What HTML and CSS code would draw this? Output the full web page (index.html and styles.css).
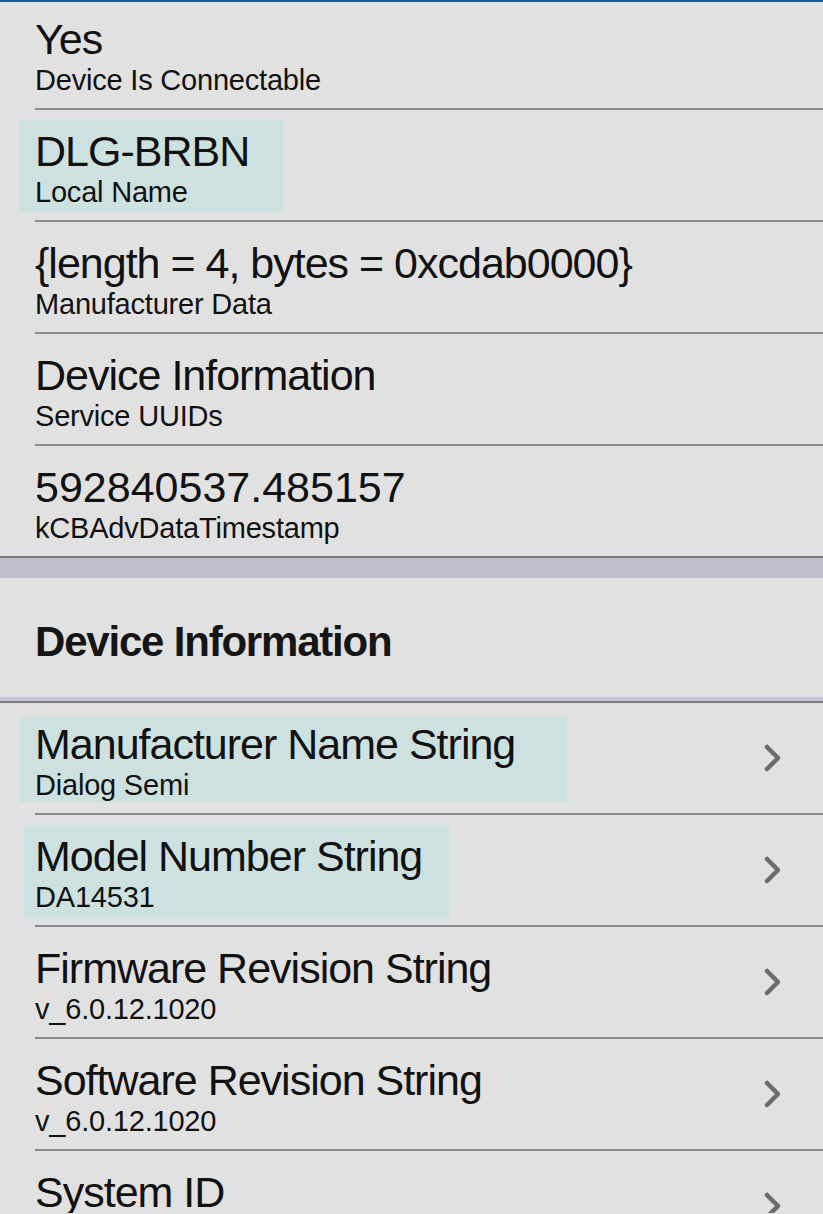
FILE: index.html
```html
<!DOCTYPE html>
<html lang="en">
<head>
    <meta charset="UTF-8">
    <meta name="viewport" content="width=device-width, initial-scale=1.0">
    <title>Advertisement Data</title>
    <link rel="stylesheet" href="styles.css">
</head>
<body>
    <div class="screen">
        <div class="list">
            <div class="row row-first">
                <div class="cell">
                    <div class="title">Yes</div>
                    <div class="sub">Device Is Connectable</div>
                </div>
            </div>
            <div class="row">
                <div class="cell hl hl-name">
                    <div class="title">DLG-BRBN</div>
                    <div class="sub">Local Name</div>
                </div>
            </div>
            <div class="row">
                <div class="cell">
                    <div class="title">{length = 4, bytes = 0xcdab0000}</div>
                    <div class="sub">Manufacturer Data</div>
                </div>
            </div>
            <div class="row">
                <div class="cell">
                    <div class="title">Device Information</div>
                    <div class="sub">Service UUIDs</div>
                </div>
            </div>
            <div class="row row-last">
                <div class="cell">
                    <div class="title num">592840537.485157</div>
                    <div class="sub">kCBAdvDataTimestamp</div>
                </div>
            </div>
        </div>

        <div class="band"></div>
        <div class="section-head">Device Information</div>
        <div class="band band-thin"></div>

        <div class="list">
            <div class="row">
                <div class="cell hl hl-maker">
                    <div class="title">Manufacturer Name String</div>
                    <div class="sub">Dialog Semi</div>
                </div>
                <svg class="chev" viewBox="0 0 20 30"><polyline points="4,4 15,15 4,26"/></svg>
            </div>
            <div class="row">
                <div class="cell hl hl-model">
                    <div class="title">Model Number String</div>
                    <div class="sub">DA14531</div>
                </div>
                <svg class="chev" viewBox="0 0 20 30"><polyline points="4,4 15,15 4,26"/></svg>
            </div>
            <div class="row">
                <div class="cell">
                    <div class="title">Firmware Revision String</div>
                    <div class="sub">v_6.0.12.1020</div>
                </div>
                <svg class="chev" viewBox="0 0 20 30"><polyline points="4,4 15,15 4,26"/></svg>
            </div>
            <div class="row">
                <div class="cell">
                    <div class="title">Software Revision String</div>
                    <div class="sub">v_6.0.12.1020</div>
                </div>
                <svg class="chev" viewBox="0 0 20 30"><polyline points="4,4 15,15 4,26"/></svg>
            </div>
            <div class="row row-cut">
                <div class="cell">
                    <div class="title">System ID</div>
                </div>
                <svg class="chev" viewBox="0 0 20 30"><polyline points="4,4 15,15 4,26"/></svg>
            </div>
        </div>
    </div>
</body>
</html>
```

FILE: styles.css
```css
html, body {
    margin: 0;
    padding: 0;
}
body {
    background-color: #e1e1e1;
    font-family: "Liberation Sans", Arial, sans-serif;
    color: #111;
    overflow: hidden;
}
.screen {
    border-top: 2px solid #1f5a8e; /* nav bar edge */
    height: 1212px;
    overflow: hidden;
}
.list {
    display: flex;
    flex-direction: column;
}
.row {
    height: 110px;
    box-sizing: border-box;
    padding: 17px 40px 0 35px;
    display: flex;
    justify-content: space-between;
    align-items: flex-start;
    position: relative;
}
/* inset separator */
.row::after {
    content: "";
    position: absolute;
    left: 35px;
    right: 0;
    bottom: -2px;
    height: 2px;
    background-color: #8a8a8a;
}
.row + .row {
    margin-top: 2px;
}
.row-first {
    height: 106px;
    padding-top: 13px;
}
.row-last::after {
    display: none;
}
.row-cut {
    height: 62px;
    overflow: hidden;
}
.row-cut::after {
    display: none;
}
.cell {
    display: flex;
    flex-direction: column;
}
.title {
    font-size: 43px;
    line-height: 48px;
    letter-spacing: -1px;
    white-space: nowrap;
}
.title.num {
    letter-spacing: 0;
}
.sub {
    font-size: 29px;
    line-height: 34px;
    letter-spacing: -0.2px;
    white-space: nowrap;
}
.hl {
    background-color: #cde1e0;
    box-sizing: border-box;
}
.hl-name {
    width: 264px;
    margin: -7px 0 0 -16px;
    padding: 7px 0 3px 16px;
}
.hl-maker {
    width: 547px;
    margin: -3px 0 0 -15px;
    padding: 3px 0 0 15px;
}
.hl-model {
    width: 425px;
    margin: -7px 0 0 -11px;
    padding: 7px 0 5px 11px;
}
.chev {
    width: 20px;
    height: 30px;
    margin-top: 23px;
    flex-shrink: 0;
}
.chev polyline {
    fill: none;
    stroke: #6b6b6b;
    stroke-width: 4.5;
    stroke-linecap: round;
    stroke-linejoin: round;
}
.band {
    border-top: 2px solid #7c7c7c;
    height: 20px;
    background-color: #c1bed0;
}
.band-thin {
    border-top: none;
    border-bottom: 2px solid #7c7c7c;
    height: 4px;
    background-color: #c8c5d6;
}
.section-head {
    height: 119px;
    box-sizing: border-box;
    padding: 8px 0 0 35px;
    display: flex;
    align-items: center;
    font-size: 42px;
    font-weight: bold;
    letter-spacing: -1.2px;
    color: #151515;
}
```
